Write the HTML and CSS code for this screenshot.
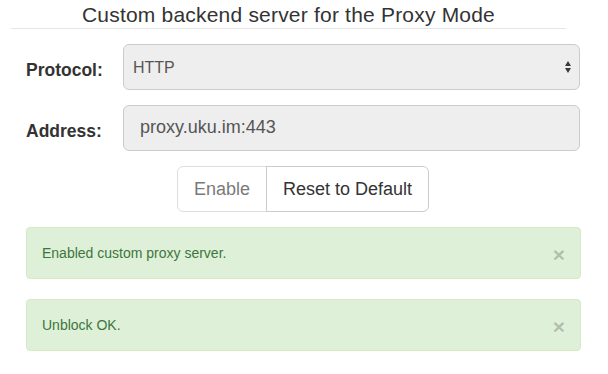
FILE: index.html
```html
<!DOCTYPE html>
<html lang="en">

<head>
    <meta charset="UTF-8">
    <meta name="viewport" content="width=device-width, initial-scale=1.0">
    <title>Proxy Mode Settings</title>
    <link rel="stylesheet" href="styles.css">
</head>

<body>
    <div class="page">
        <h4 class="title">Custom backend server for the Proxy Mode</h4>
        <form class="settings" action="#" method="post">
            <div class="form-row">
                <label class="control-label" for="protocol">Protocol:</label>
                <div class="select-wrap">
                    <select id="protocol" class="form-control" disabled>
                        <option value="http" selected>HTTP</option>
                        <option value="https">HTTPS</option>
                    </select>
                </div>
            </div>
            <div class="form-row">
                <label class="control-label" for="address">Address:</label>
                <input type="text" id="address" class="form-control" value="proxy.uku.im:443" readonly>
            </div>
            <div class="btn-row">
                <div class="btn-group">
                    <button type="button" class="btn" disabled>Enable</button>
                    <button type="button" class="btn">Reset to Default</button>
                </div>
            </div>
        </form>
        <div class="alert">
            Enabled custom proxy server.
            <button type="button" class="close">&times;</button>
        </div>
        <div class="alert">
            Unblock OK.
            <button type="button" class="close">&times;</button>
        </div>
    </div>
</body>

</html>
```
FILE: styles.css
```css
html,
body {
    margin: 0;
    padding: 0;
    background: #fff;
    font-family: "Liberation Sans", Arial, Helvetica, sans-serif;
    color: #333;
}

.title {
    width: 555px;
    margin: 0 0 15px 11px;
    padding: 3px 0 1px;
    border-bottom: 1px solid #e5e5e5;
    font-size: 21px;
    font-weight: normal;
    line-height: 24px;
    letter-spacing: 0.2px;
    text-align: center;
    color: #333;
}

.settings {
    margin: 0;
    padding: 0 28px 0 26px;
}

.form-row {
    display: flex;
    margin-bottom: 15px;
}

.control-label {
    width: 97px;
    flex: none;
    padding-top: 16px;
    font-size: 17.5px;
    font-weight: bold;
    line-height: 20px;
}

.form-control {
    box-sizing: border-box;
    height: 46px;
    margin: 0;
    border: 1px solid #ccc;
    border-radius: 6px;
    background: #eee;
    color: #555;
    font-family: inherit;
    opacity: 1;
}

input.form-control {
    flex: 1;
    padding: 10px 16px 12px;
    font-size: 18px;
}

.select-wrap {
    position: relative;
    flex: 1;
}

.select-wrap select {
    width: 100%;
    padding: 0 30px 0 9px;
    font-size: 16px;
    -webkit-appearance: none;
    appearance: none;
}

/* up / down arrows of the select */
.select-wrap::before,
.select-wrap::after {
    content: "";
    position: absolute;
    right: 9px;
    width: 0;
    height: 0;
    border-left: 3px solid transparent;
    border-right: 3px solid transparent;
}

.select-wrap::before {
    top: 17px;
    border-bottom: 5px solid #3a3a3a;
}

.select-wrap::after {
    top: 24px;
    border-top: 5px solid #3a3a3a;
}

.btn-row {
    display: flex;
    justify-content: center;
    margin-bottom: 15px;
}

.btn-group {
    display: flex;
}

.btn {
    height: 46px;
    margin: 0;
    padding: 10px 16px;
    border: 1px solid #ccc;
    background: #fff;
    color: #333;
    font-family: inherit;
    font-size: 18px;
    line-height: 24px;
    cursor: pointer;
}

.btn:first-child {
    border-radius: 6px 0 0 6px;
}

.btn:last-child {
    margin-left: -1px;
    border-radius: 0 6px 6px 0;
}

.btn:disabled {
    opacity: 0.65;
    cursor: not-allowed;
}

.alert {
    position: relative;
    margin: 0 27px 20px 26px;
    padding: 15px 35px 15px 15px;
    border: 1px solid #d6e9c6;
    border-radius: 4px;
    background: #dff0d8;
    color: #3c763d;
    font-size: 14px;
    line-height: 20px;
}

.close {
    position: absolute;
    top: 16px;
    right: 15px;
    padding: 0;
    border: 0;
    background: transparent;
    color: #000;
    font-family: inherit;
    font-size: 21px;
    font-weight: bold;
    line-height: 1;
    text-shadow: 0 1px 0 #fff;
    opacity: 0.2;
    cursor: pointer;
}
```
